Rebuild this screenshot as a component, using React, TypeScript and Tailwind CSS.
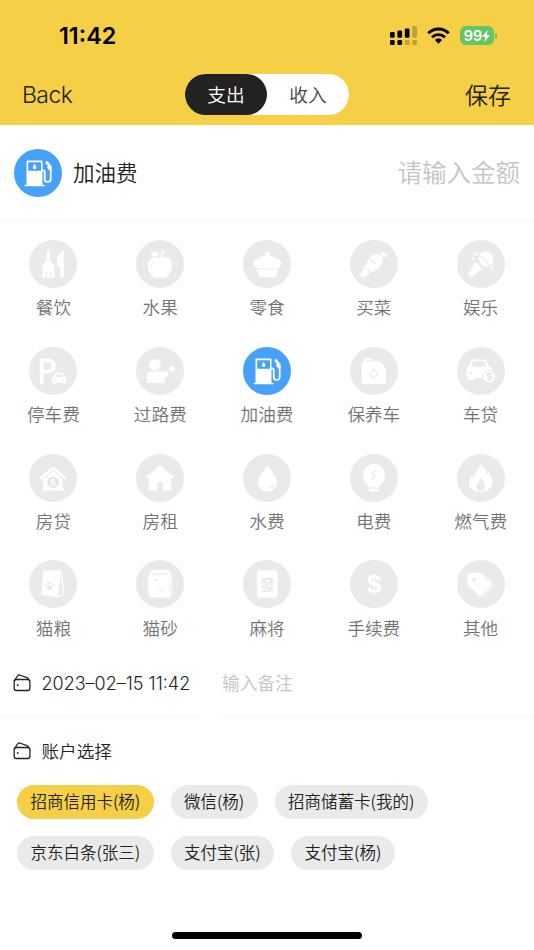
import type { ReactNode } from "react";

const G = "#eaeaea";

const FuelIcon = ({ hole }: { hole: string }) => (
  <>
    <path d="M13.5 11.5h14a1 1 0 0 1 1 1V35.8h1.6a.7.7 0 0 1 0 1.5H11.2a.7.7 0 0 1 0-1.5h1.3V12.5a1 1 0 0 1 1-1Z" fill="#fff" />
    <rect x="14.2" y="13.2" width="12.8" height="8.6" rx=".6" fill={hole} />
    <path d="M20.6 14.8c1 1.500 1.700 2.500 1.700 3.600a1.700 1.700 0 0 1-3.400 0c0-1.100.7-2.100 1.700-3.600Z" fill="#fff" />
    <path
      d="M27.900 21.300h1.300a1.500 1.500 0 0 1 1.500 1.500V30a3 3 0 0 0 6 0V19.800c0-1.200-.3-2-1-3l-2-3.100"
      fill="none"
      stroke="#fff"
      strokeWidth="1.700"
    />
    <path d="m31.600 12.600 2.200-.3 1.400 2.500 2.300 2.200v4.600l-2.400-.4-2.100-2.700 1-1.700-2.400-2.300Z" fill="#fff" />
  </>
);

const icons: Record<string, ReactNode> = {
  meal: (
    <>
      <path d="M17.700 10.500h2.900V20c0 1.700 4.900 3.200 4.900 6.500V38h-3v-7.600h-1.300V38h-3.300v-7.600h-1.300V38h-3.200V26.500c0-3.300 4.300-4.800 4.300-6.500Z" />
      <path d="M34.700 10.400V38h-3.500V27.300c-2.200-.7-3.500-2.600-3.500-5.300 0-5.200 3.100-10.500 7-11.600Z" />
    </>
  ),
  fruit: (
    <>
      <path d="M24 18.200c2.300-1.300 5.200-1.600 7.600-.3 3.400 1.800 4.800 5.400 4.300 9.400-.7 6-4.800 11-9 11-1.200 0-1.800-.5-2.900-.5s-1.700.5-2.900.5c-4.200 0-8.300-5-9-11-.5-4 .9-7.600 4.300-9.400 2.400-1.300 5.300-1 7.600.3Z" />
      <path d="M14.500 14.300c2-3.300 6-3.600 8.900-.5-2.600 3.600-6.300 3.700-8.900.5Z" />
      <path d="M25.200 19.500c-.2-4 .1-6.900 3-8" fill="none" stroke="#fff" strokeWidth="1.500" strokeLinecap="round" />
      <path d="M14.800 26.500c.1-2.500 1-4 3-4.900" fill="none" stroke={G} strokeWidth="1" strokeLinecap="round" />
    </>
  ),
  snack: (
    <>
      <circle cx="24.400" cy="14" r="2.400" />
      <path d="M24.400 15.800c4 0 7 .9 8.800 2.600 3.200.3 5 2 5 4.900 0 2.900-1.300 4.500-3.700 4.700-1.500.9-3.200.8-4.600-.1-1.700 1-3.800 1-5.500 0-1.800 1-4 1-5.800 0-1.500.9-3.300 1-4.800-.1-2.200-.3-3.300-1.900-3.300-4.500 0-2.900 1.900-4.600 5-4.900 1.800-1.700 4.800-2.600 8.900-2.600Z" />
      <path d="M13.500 29c1.900.8 3.800.7 5.500-.1 1.800.9 3.900.9 5.700 0 1.700.9 3.800.9 5.500 0 1.700.8 3.500.9 5.300.1L33.200 36c-.2.8-.6 1-1.300 1H17.300c-.7 0-1.100-.3-1.300-1Z" />
    </>
  ),
  veggie: (
    <>
      <path d="M19.300 18.300c3.700-4.700 8.300-5.200 11.300-2.200 3.300 3.200 2.700 7.700-1.900 11.500L15 36.600c-1.600 1-3 1.300-4 .3s-.7-2.200-.1-3.500Z" />
      <path d="M31.300 17.800 30.300 10.500l2.900 3.300 1-3 .3 3.700 3.200-1.500-1.600 2.700 1.700.5Z" />
      <path d="m19 18 6 6M16 28l4.800 4.600" stroke={G} strokeWidth="1.300" />
    </>
  ),
  fun: (
    <>
      <path d="M22.800 13.500c3.300-2.800 8.200-2.800 11.200.2 3 3.100 3.100 8 .2 11.300Z" />
      <path d="m22 15.500 10.200 10.900c-2.800.8-5.600 0-7.700-2.200s-3.100-5.700-2.500-8.700Z" />
      <path d="m18.600 22.300 6.500 6.500L15 36.500l-2.200.3-1.600-1.600.5-2.200Z" />
      <path d="m21 12.500 13.700 14.700" stroke="#fff" strokeWidth="1" />
      <path d="m34.800 26.400 1.800 2-1.200 1.700-1.800-2ZM18.500 12l.7 1.300 1.300.7-1.300.7-.7 1.300-.7-1.300-1.300-.7 1.300-.7ZM16 17l.6 1.200 1.200.6-1.200.6L16 20.600l-.6-1.200-1.200-.6 1.200-.6Z" />
    </>
  ),
  parking: (
    <>
      <path d="M12.700 37.200V13.300h5.800c4 0 6.300 2 6.300 5.500s-2.300 5.700-6.300 5.700h-5.800" fill="none" stroke="#fff" strokeWidth="3.700" />
      <path d="M26.300 25.700h7.900l1.700 4.300c1 .4 1.400 1 1.400 2v3.500h-1v1.700h-2.300v-1.700h-7.500v1.700h-2.300v-1.700h-1V32c0-1 .4-1.600 1.400-2Z" />
      <path d="m27.300 27.200-1.100 2.900h8.100l-1.100-2.900Z" fill={G} />
      <circle cx="26.300" cy="32.700" r=".9" fill={G} />
      <circle cx="34.300" cy="32.700" r=".9" fill={G} />
    </>
  ),
  toll: (
    <>
      <circle cx="19" cy="17.800" r="5.900" />
      <path d="M15.600 24.600h13.800c2 0 3.200 1 3.200 2.500 0 1.600-1.200 2.600-3 2.600h-1V36H10.600v-6.200c0-3 2-5.200 5-5.200Z" />
      <rect x="33.300" y="19.200" width="5.400" height="5.400" rx="1" transform="rotate(45 36 21.900)" />
    </>
  ),
  fuel: <FuelIcon hole="#45a2f8" />,
  service: (
    <>
      <path d="M15 11.300h6.400a.8.8 0 0 1 .8.800v2.400h6.500c1 0 1.500.3 2.200 1l4.300 4.700c.6.700.8 1.200.8 2v12.600c0 1.600-.9 2.500-2.500 2.500H14.200c-1.600 0-2.500-.9-2.500-2.500V17c0-1.400.9-2.300 2.500-2.500v-2.400a.8.800 0 0 1 .8-.8Z" />
      <path d="M15.800 14h5" stroke={G} strokeWidth=".9" />
      <path d="M23.900 22c2 2.200 3.200 3.500 3.200 5.100a3.200 3.200 0 0 1-6.400 0c0-1.600 1.200-2.900 3.200-5.100Z" fill="none" stroke={G} strokeWidth="1.300" />
    </>
  ),
  carLoan: (
    <>
      <path d="M15.800 12.500h11.600c1.200 0 2 .5 2.400 1.600l1.700 5c2.300.3 3.300 1.300 3.300 3.400V31H29v.8c0 .7-.4 1.100-1.200 1.100h-1.600c-.8 0-1.300-.4-1.300-1.100V31H17v.8c0 .7-.5 1.100-1.300 1.100H12c-.8 0-1.300-.4-1.300-1.100V30c-.8-.4-1.100-1-1.100-2v-5.500c0-2 1-3 2.800-3.400l1.300-5c.3-1.100 1-1.600 2.100-1.600Z" />
      <path d="M15.700 14.300h11.700l1.600 5.300H14.200Z" fill={G} />
      <circle cx="14" cy="25.900" r="1.500" fill={G} />
      <circle cx="32.300" cy="29.700" r="7" fill={G} />
      <circle cx="32.300" cy="29.700" r="5.900" />
      <text x="32.300" y="33.100" textAnchor="middle" fontSize="9.500" fontWeight="500" fill="#dedede">$</text>
    </>
  ),
  mortgage: (
    <>
      <path d="m24 13.700 12.800 11.100M24 13.700 11.200 24.800" stroke="#fff" strokeWidth="2.600" />
      <path d="m24 17 9.700 8.300v9.700h1.300v1.500H12.800V35h1.500v-9.700Z" />
      <circle cx="23.900" cy="28.300" r="5.600" fill="#e2e2e2" />
      <text x="23.900" y="31.700" textAnchor="middle" fontSize="9.500" fontWeight="600" fill="#fff">$</text>
    </>
  ),
  rent: <path d="M24 11.300 38 23c.4.500.2 1-.4 1h-2.300v12.700h-8.500V28h-5.500v8.700h-8.600V24h-2.300c-.6 0-.8-.5-.4-1Z" />,
  water: (
    <>
      <path d="M24.400 10.500c4.200 7.200 9.600 12.200 9.600 17.700a9.600 9.600 0 0 1-19.200 0c0-5.500 5.400-10.500 9.600-17.700Z" />
      <path d="M27.300 34c1.800-.6 2.900-1.700 3.500-3.200" fill="none" stroke={G} strokeWidth="1.400" />
    </>
  ),
  power: (
    <>
      <path d="M24 10a11.200 11.200 0 0 1 6.700 20.100c-1.100.9-1.500 2-1.500 3.500H18.800c0-1.500-.4-2.600-1.500-3.500A11.200 11.200 0 0 1 24 10ZM18.800 34.800h10.500v1.700l-1.500 1h-7.500l-1.500-1Z" />
      <path d="m26.100 16.300-4.500 4.200 4.200 1-4.100 4.500" fill="none" stroke={G} strokeWidth="1.200" />
    </>
  ),
  gas: (
    <>
      <path d="M23 10.200c5 3 7.500 6.800 6.700 11 .9-.6 1.400-1.600 1.700-3.200 2.700 3 4 6.200 4 9.700 0 6-4.300 9.900-11.600 9.900-7.500 0-11.600-3.600-11.600-9.400 0-3 1.400-5.400 3-7.500.2 1.800.7 2.700 1.900 3.500-.3-5.500 5.600-8.500 5.900-14Z" />
      <path d="M23.500 24.200c3 2.300 4.500 4.800 4.500 7.700 0 3-1.500 5-4.400 5.200-2.800-.1-4.300-1.700-4.300-4.200 0-3.300 3.700-5 4.200-8.700Z" fill={G} />
    </>
  ),
  catFood: (
    <>
      <path d="M15.300 10.300H32c.5 0 .7.200.8.700l2.700 23.500-6.800 2.700-15.200-2.300c-.8-.1-1.100-.4-1-1.200l1.900-22.500c0-.6.400-.9.900-.9Z" />
      <path d="m32 13-3 22.800 5.200-1.900Z" fill={G} />
      <ellipse cx="20.500" cy="27.500" rx="2.700" ry="2.200" fill={G} />
      <g fill={G}>
        <circle cx="17" cy="24.700" r="1.100" />
        <circle cx="19.300" cy="22.900" r="1.100" />
        <circle cx="22" cy="22.900" r="1.100" />
        <circle cx="24.200" cy="24.900" r="1.100" />
      </g>
    </>
  ),
  catLitter: (
    <>
      <path d="M17 10h14.500c1.500 0 2.300.8 2.300 2.200v1.600c1.600 1.500 2.200 4.300 2.200 8.200 0 5-.3 8.700-.9 12.500-.3 2-1.200 3.100-3.300 3.100H16c-2 0-3-1-3.200-3.100-.6-4-.9-7.500-.8-12.500 0-4 .6-6.700 2.700-8.200v-1.600c0-1.400.8-2.200 2.300-2.200Z" />
      <path d="M16.500 14.100h15.800M17 20.200h5M34.100 22.500c.2 3.300.1 5.500-.3 8" stroke={G} strokeWidth="1.300" fill="none" />
      <path d="M23 29h3l-2.700 3.300h1.500M27 31.300h2" stroke={G} strokeWidth="1" fill="none" />
    </>
  ),
  mahjong: (
    <>
      <rect x="14.200" y="10.200" width="20.500" height="27.500" rx="2" />
      <text x="24.400" y="29.500" textAnchor="middle" fontSize="15" fill="#e0e0e0">發</text>
    </>
  ),
  fee: <text x="24.100" y="33.200" textAnchor="middle" fontSize="26" fontWeight="700" fontFamily="Liberation Sans">$</text>,
  other: (
    <>
      <path d="m11.300 13.300 11-.9c.6 0 1 .1 1.400.5l10.700 10.800c.5.500.5 1 0 1.500L23.700 36c-.5.500-1 .5-1.500 0L10.900 25c-.4-.4-.6-.8-.6-1.400v-9.200c0-.7.3-1 1-1.100Z" />
      <path d="m25.300 12.700 11.200 11.600c.3.300.3.500 0 .8L25.800 36.200" fill="none" stroke="#fff" strokeWidth="1" />
      <circle cx="17" cy="19.400" r="1.900" fill={G} />
    </>
  ),
};

const categories = [
  { name: "餐饮", icon: "meal" },
  { name: "水果", icon: "fruit" },
  { name: "零食", icon: "snack" },
  { name: "买菜", icon: "veggie" },
  { name: "娱乐", icon: "fun" },
  { name: "停车费", icon: "parking" },
  { name: "过路费", icon: "toll" },
  { name: "加油费", icon: "fuel" },
  { name: "保养车", icon: "service" },
  { name: "车贷", icon: "carLoan" },
  { name: "房贷", icon: "mortgage" },
  { name: "房租", icon: "rent" },
  { name: "水费", icon: "water" },
  { name: "电费", icon: "power" },
  { name: "燃气费", icon: "gas" },
  { name: "猫粮", icon: "catFood" },
  { name: "猫砂", icon: "catLitter" },
  { name: "麻将", icon: "mahjong" },
  { name: "手续费", icon: "fee" },
  { name: "其他", icon: "other" },
];

const accounts = ["招商信用卡(杨)", "微信(杨)", "招商储蓄卡(我的)", "京东白条(张三)", "支付宝(张)", "支付宝(杨)"];

function CategoryIcon({ icon, active }: { icon: string; active: boolean }) {
  return (
    <svg viewBox="0 0 48 48" className="size-12 shrink-0" fill="#fff">
      <circle cx="24" cy="24" r="24" fill={active ? "#45a2f8" : G} />
      {icons[icon]}
    </svg>
  );
}

function WalletIcon() {
  return (
    <svg viewBox="0 0 18 18" className="size-[18px] shrink-0" fill="none" stroke="#222" strokeWidth="1.300" strokeLinejoin="round">
      <rect x="1.200" y="5.500" width="15.700" height="11" rx="2.200" />
      <path d="M1.800 6.100 4.900 1.500c.4-.6.900-.7 1.700-.5l7.400 2.600c.9.300 1.300.9 1.500 1.900" />
      <circle cx="4.700" cy="11" r=".9" fill="#222" stroke="none" />
    </svg>
  );
}

function StatusBar() {
  return (
    <div className="flex h-[71px] items-center pr-[37px] pl-[59px]">
      <span className="pt-px text-[23.3px] font-semibold text-black">11:42</span>
      <svg viewBox="0 0 27 19" className="ml-auto h-[19px] w-[27px]">
        <rect x="0" y="6" width="4.700" height="5.700" rx="1.300" />
        <rect x="7.400" y="4.500" width="4.700" height="7.200" rx="1.300" />
        <rect x="14.800" y="2.400" width="4.700" height="9.300" rx="1.300" />
        <rect x="22.200" y="0" width="4.700" height="11.700" rx="1.300" opacity=".22" />
        <rect x="0" y="14" width="4.700" height="5" rx="1.300" />
        <rect x="7.400" y="14" width="4.700" height="5" rx="1.300" />
        <rect x="14.800" y="14" width="4.700" height="5" rx="1.300" opacity=".22" />
        <rect x="22.200" y="14" width="4.700" height="5" rx="1.300" opacity=".22" />
      </svg>
      <svg viewBox="0 0 23 17" className="ml-[10px] h-[17px] w-[23px]" fill="none" stroke="#000" strokeWidth="2.900">
        <path d="M1.200 6.300c5.700-5.700 14.900-5.700 20.600 0" />
        <path d="M5 10.200c3.600-3.500 9.400-3.500 13 0" />
        <path d="M7.900 12.900c2-1.900 5.200-1.900 7.200 0L11.500 16.700Z" fill="#000" stroke="none" />
      </svg>
      <div className="ml-[10px] flex h-[19px] w-[34px] items-center justify-center rounded-[6px] bg-[#64c466] text-[14.5px] font-semibold text-white">
        99
        <svg viewBox="0 0 8 12" className="h-[12px] w-[8px]" fill="#fff">
          <path d="M5.500 0 .3 6.800h3L2.500 12 7.800 5.100h-3Z" />
        </svg>
      </div>
      <span className="ml-[1px] h-[6px] w-[2px] rounded-r-full bg-[#64c466]" />
    </div>
  );
}

export default function App() {
  return (
    <div className="flex h-[950px] w-[534px] flex-col overflow-hidden bg-white font-['Inter','Noto_Sans_CJK_SC',sans-serif] font-[350] text-[#222]">
      <header className="h-[125px] shrink-0 bg-[#f5cf46]">
        <StatusBar />
        <div className="flex h-[48px] items-center justify-between px-[23px] text-[23px] leading-none">
          <button className="w-[69px] text-left text-[23px] tracking-[-0.025em] ml-[-1px]">Back</button>
          <div className="mt-[-1px] flex h-[41px] w-[164px] rounded-full bg-white text-[18.7px]">
            <button className="w-[82px] rounded-full bg-[#222] pt-[3px] text-white">支出</button>
            <button className="w-[82px] pt-[3px] text-[#444]">收入</button>
          </div>
          <button className="w-[68px] pt-[2px] text-right">保存</button>
        </div>
      </header>

      <section className="flex h-[96px] shrink-0 items-center border-b border-[#f3f3f3] px-[14px]">
        <CategoryIcon icon="fuel" active />
        <span className="ml-[11px] pt-[2px] text-[21.5px]">加油费</span>
        <span className="ml-auto pt-[2px] text-[24.5px] text-[#c4c4c4]">请输入金额</span>
      </section>

      <section className="grid shrink-0 grid-cols-5 pt-[19px]">
        {categories.map((c) => (
          <div key={c.name} className="flex h-[106.8px] flex-col items-center">
            <CategoryIcon icon={c.icon} active={c.icon === "fuel"} />
            <span className="mt-[7.4px] text-[17.6px] leading-[26px] text-[#737373]">{c.name}</span>
          </div>
        ))}
      </section>

      <section className="flex h-[50px] shrink-0 gap-[22px] text-[17.7px]">
        <div className="flex w-[200px] border-b border-[#f3f3f3] pl-[13px]">
          <div className="flex h-[32px] items-center gap-[10.5px] whitespace-nowrap">
            <WalletIcon />
            <span className="text-[18px]">2023–02–15 11:42</span>
          </div>
        </div>
        <div className="flex-1 border-b border-[#f3f3f3]">
          <div className="flex h-[32px] items-center pt-[2px] text-[#c4c4c4]">输入备注</div>
        </div>
      </section>

      <section className="pt-[18px]">
        <div className="flex h-[32px] items-center gap-[10.5px] pl-[13px] text-[17.6px]">
          <WalletIcon />
          <span className="pt-[2px]">账户选择</span>
        </div>
        <div className="mt-[17.5px] flex flex-wrap gap-x-[16.8px] gap-y-[17px] pl-[17px]">
          {accounts.map((name, i) => (
            <button
              key={name}
              className={`flex h-[34px] items-center rounded-full px-[13.4px] font-['Noto_Sans_CJK_SC',sans-serif] text-[16.5px] ${i === 0 ? "bg-[#f5cf46]" : "bg-[#eaeaea]"}`}
            >
              {name}
            </button>
          ))}
        </div>
      </section>

      <div className="mx-auto mt-auto mb-[11px] h-[7px] w-[190px] shrink-0 rounded-full bg-black" />
    </div>
  );
}
